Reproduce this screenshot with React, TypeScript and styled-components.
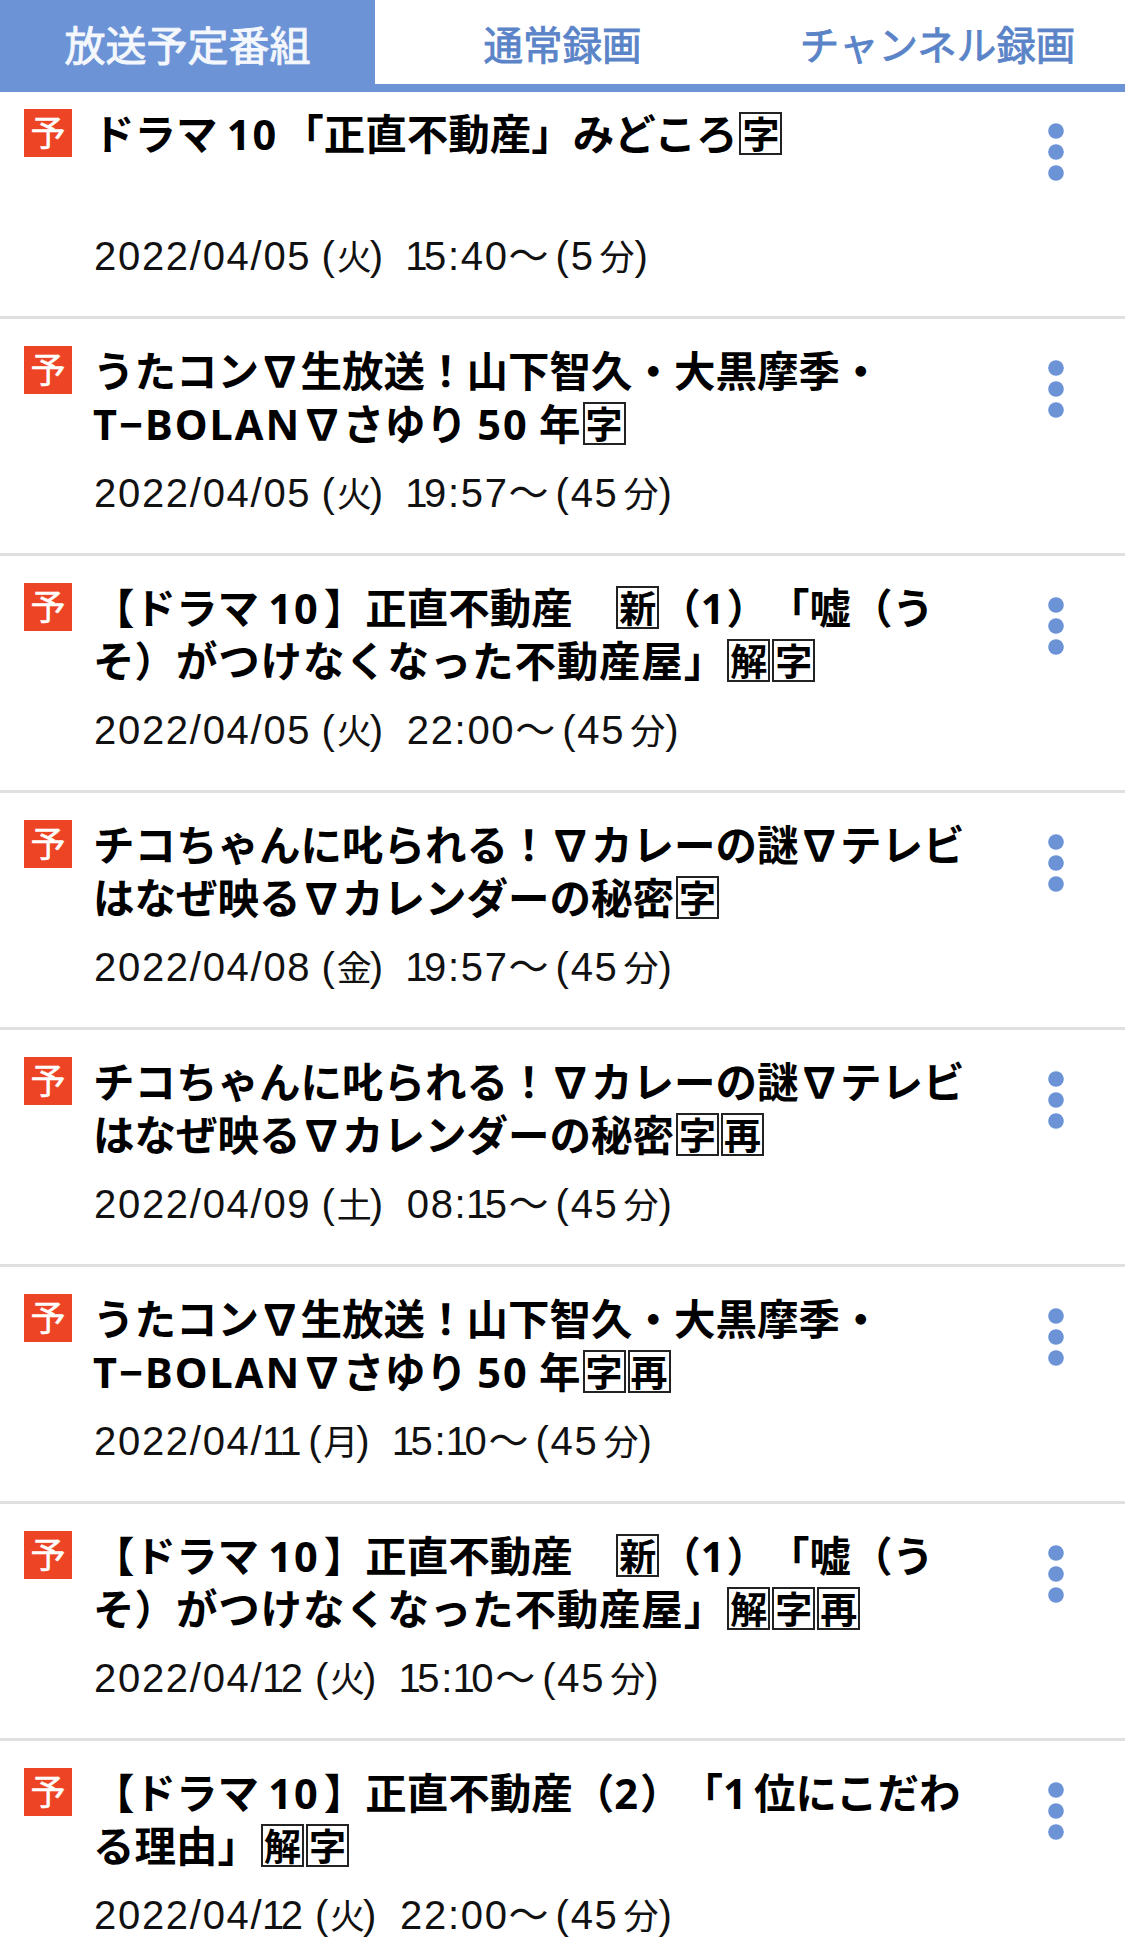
import styled, { createGlobalStyle } from 'styled-components'

const blue = '#6b93d6'

const GlobalStyle = createGlobalStyle`
  html, body {
    margin: 0;
    padding: 0;
    height: 100%;
    overflow: hidden;
    background: #fff;
  }
  body {
    font-family: "Liberation Sans", "Noto Sans CJK JP", sans-serif;
    color: #000;
    text-autospace: normal;
    text-spacing-trim: space-all;
  }
`

type Item = {
  title: React.ReactNode
  date: string
  day: string
  time: string
  mins: string
}

const Page = styled.div`
  width: 1125px;
  height: 1947px;
  overflow: hidden;
`

const Tabs = styled.nav`
  display: grid;
  grid-template-columns: repeat(3, 1fr);
  height: 92px;
  box-sizing: border-box;
  border-bottom: 8px solid ${blue};
`

const Tab = styled.div<{ $active?: boolean }>`
  display: flex;
  align-items: center;
  justify-content: center;
  font-size: ${(p) => (p.$active ? 41 : 39.5)}px;
  font-family: "Noto Sans CJK JP", sans-serif;
  -webkit-text-stroke: 0.9px currentColor;
  padding-bottom: 7px;
  margin-bottom: -8px;
  color: ${(p) => (p.$active ? '#f4f7fc' : '#5b84c8')};
  background: ${(p) => (p.$active ? blue : 'transparent')};
`

const List = styled.ul`
  list-style: none;
  margin: 0;
  padding: 0;
`

const Row = styled.li<{ $first?: boolean }>`
  display: grid;
  grid-template-columns: 48px 1fr 16px;
  column-gap: 22px;
  box-sizing: border-box;
  height: ${(p) => (p.$first ? 227 : 237)}px;
  padding: ${(p) => (p.$first ? 17 : 27)}px 61px 0 24px;
  border-bottom: 3px solid #e0e0e0;
`

const Badge = styled.span`
  width: 48px;
  height: 48px;
  display: flex;
  align-items: center;
  justify-content: center;
  background: #ee4426;
  color: #fff;
  font-size: 35px;
  -webkit-text-stroke: 0.5px currentColor;
  line-height: 1;
`

const Body = styled.div`
  display: flex;
  flex-direction: column;
  min-width: 0;
`

const Title = styled.div`
  width: 880px;
  height: 106px;
  margin-left: -1px;
  font-family: "Noto Sans CJK JP", sans-serif;
  font-size: 41.5px;
  line-height: 53px;
  font-weight: 700;
  margin-top: -3px;
`

const Latin = styled.span<{ $pad?: number }>`
  font-family: "Noto Sans", sans-serif;
  letter-spacing: 2px;
  line-height: 0;
  margin: 0 ${(p) => p.$pad ?? 0}px;
`

const Nabla = styled.span`
  font-family: "Noto Sans CJK JP", sans-serif;
`

const Loose = styled.span`
  letter-spacing: 0.8px;
`

const BoxGlyph = styled.span`
  display: inline-flex;
  align-items: center;
  justify-content: center;
  box-sizing: border-box;
  width: 43px;
  height: 43px;
  margin-left: 2px;
  border: 2px solid #222;
  font-size: 37px;
  line-height: 1;
  vertical-align: 1px;
`

const DateLine = styled.div`
  display: flex;
  gap: 22px;
  font-size: 40px;
  letter-spacing: 1.7px;
  line-height: 52px;
  margin-top: 18px;
  color: #111;
`

const DatePart = styled.span`
  word-spacing: -2.5px;
`

const One = styled.span`
  margin-left: -1.5px;
  letter-spacing: -3.5px;
`

const Kanji = styled.span<{ $tight?: boolean }>`
  font-size: 35px;
  letter-spacing: 0;
  margin-right: ${(p) => (p.$tight ? -2 : 0)}px;
`

const Wave = styled.span`
  letter-spacing: 0;
  margin-right: 7px;
`

const Menu = styled.div`
  margin-top: 14px;
  line-height: 0;
`

const Box = ({ c }: { c: string }) => <BoxGlyph>{c}</BoxGlyph>
const Tri = () => <Nabla>∇</Nabla>

// the 1 is narrower than the other digits in the reference font
const Digits = ({ text }: { text: string }) => (
  <>
    {text.split('').map((ch, i) => (ch === '1' ? <One key={i}>1</One> : ch))}
  </>
)

const utakon = <>うたコン<Tri />生放送！山下智久・大黒摩季・<Latin>T−BOLAN</Latin><Tri />さゆり<Latin $pad={5}>50</Latin>年<Box c="字" /></>
const chiko = <>チコちゃんに叱られる！<Tri />カレーの謎<Tri />テレビはなぜ映る<Tri />カレンダーの秘密<Box c="字" /></>
const fudosan = <>【ドラマ<Latin $pad={4}>10</Latin>】正直不動産　<Box c="新" />（<Latin>1</Latin>）「嘘（うそ）<Loose>がつけなくなった不動産屋</Loose>」<Box c="解" /><Box c="字" /></>

const items: Item[] = [
  {
    title: <>ドラマ<Latin $pad={4}>10</Latin>「正直不動産」みどころ<Box c="字" /></>,
    date: '2022/04/05',
    day: '火',
    time: '15:40',
    mins: '5',
  },
  { title: utakon, date: '2022/04/05', day: '火', time: '19:57', mins: '45' },
  { title: fudosan, date: '2022/04/05', day: '火', time: '22:00', mins: '45' },
  { title: chiko, date: '2022/04/08', day: '金', time: '19:57', mins: '45' },
  { title: <>{chiko}<Box c="再" /></>, date: '2022/04/09', day: '土', time: '08:15', mins: '45' },
  { title: <>{utakon}<Box c="再" /></>, date: '2022/04/11', day: '月', time: '15:10', mins: '45' },
  { title: <>{fudosan}<Box c="再" /></>, date: '2022/04/12', day: '火', time: '15:10', mins: '45' },
  {
    title: <>【ドラマ<Latin $pad={4}>10</Latin>】正直不動産（<Latin>2</Latin>）「<Latin>1</Latin>位にこだわる理由」<Box c="解" /><Box c="字" /></>,
    date: '2022/04/12',
    day: '火',
    time: '22:00',
    mins: '45',
  },
]

const MenuIcon = () => (
  <svg width="16" height="58" viewBox="0 0 16 58" fill={blue}>
    <circle cx="8" cy="8" r="7.8" />
    <circle cx="8" cy="29" r="7.8" />
    <circle cx="8" cy="50" r="7.8" />
  </svg>
)

export default function App() {
  return (
    <Page lang="ja">
      <GlobalStyle />
      <Tabs>
        <Tab $active>放送予定番組</Tab>
        <Tab>通常録画</Tab>
        <Tab>チャンネル録画</Tab>
      </Tabs>
      <List>
        {items.map((item, i) => (
          <Row key={i} $first={i === 0}>
            <Badge>予</Badge>
            <Body>
              <Title>{item.title}</Title>
              <DateLine>
                <DatePart>
                  <Digits text={item.date} /> (<Kanji $tight>{item.day}</Kanji>)
                </DatePart>
                <span>
                  <Digits text={item.time} />
                  <Wave>～</Wave>({item.mins}<Kanji>分</Kanji>)
                </span>
              </DateLine>
            </Body>
            <Menu>
              <MenuIcon />
            </Menu>
          </Row>
        ))}
      </List>
    </Page>
  )
}
